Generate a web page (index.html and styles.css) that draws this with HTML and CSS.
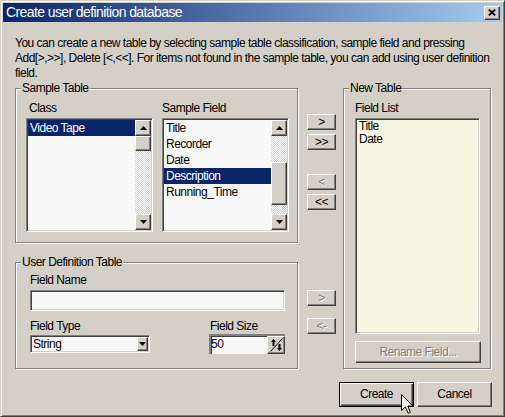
FILE: index.html
```html
<!DOCTYPE html>
<html>
<head>
<meta charset="utf-8">
<title>Create user definition database</title>
<link rel="stylesheet" href="styles.css">
</head>
<body>
<div class="window">
  <div class="titlebar">
    <span class="title">Create user definition database</span>
    <span class="close raised"><svg width="8" height="7" viewBox="0 0 8 7"><path d="M0.8 0.6L7.2 6.4M7.2 0.6L0.8 6.4" stroke="#000" stroke-width="1.7"/></svg></span>
  </div>
  <div class="content">
    <p class="desc">You can create a new table by selecting sample table classification, sample field and pressing Add[&gt;,&gt;&gt;], Delete [&lt;,&lt;&lt;]. For items not found in the sample table, you can add using user definition field.</p>
    <div class="main">
      <div class="left">
        <div class="group sample">
          <div class="caption">Sample Table</div>
          <div class="sample-grid">
            <div class="label label-class">Class</div>
            <div class="label">Sample Field</div>
            <div class="listbox sunken">
              <div class="items">
                <div class="item sel">Video Tape</div>
              </div>
              <div class="vscroll">
                <div class="sbtn raised"><svg width="7" height="4" viewBox="0 0 7 4"><path d="M3.5 0L7 4H0z"/></svg></div>
                <div class="track"><div class="thumb raised thumb-class"></div></div>
                <div class="sbtn raised"><svg width="7" height="4" viewBox="0 0 7 4"><path d="M0 0H7L3.5 4z"/></svg></div>
              </div>
            </div>
            <div class="listbox sunken">
              <div class="items">
                <div class="item">Title</div>
                <div class="item">Recorder</div>
                <div class="item">Date</div>
                <div class="item sel">Description</div>
                <div class="item">Running_Time</div>
              </div>
              <div class="vscroll">
                <div class="sbtn raised"><svg width="7" height="4" viewBox="0 0 7 4"><path d="M3.5 0L7 4H0z"/></svg></div>
                <div class="track"><div class="thumb raised thumb-field"></div></div>
                <div class="sbtn raised"><svg width="7" height="4" viewBox="0 0 7 4"><path d="M0 0H7L3.5 4z"/></svg></div>
              </div>
            </div>
          </div>
        </div>
        <div class="group user">
          <div class="caption">User Definition Table</div>
          <div class="user-form">
            <div class="label">Field Name</div>
            <div class="textbox sunken"></div>
            <div class="type-grid">
              <div class="label label-sm">Field Type</div>
              <div class="label label-sm label-size">Field Size</div>
              <div class="combo sunken">
                <span class="combo-text">String</span>
                <span class="combo-btn raised"><svg width="7" height="4" viewBox="0 0 7 4"><path d="M0 0H7L3.5 4z"/></svg></span>
              </div>
              <div class="spin">
                <span class="spin-text">50</span>
                <span class="spin-btn raised"><svg width="13" height="14" viewBox="0 0 13 14"><path d="M0.5 13.5L12.5 0.5" stroke="#000" stroke-width="1"/><path d="M3.5 1L6 4H4.5V8H2.5V4H1z" fill="#000"/><path d="M9.5 13L12 10H10.5V6H8.5V10H7z" fill="#000"/></svg></span>
              </div>
            </div>
          </div>
        </div>
      </div>
      <div class="mid">
        <div class="btn raised mbtn b-add">&gt;</div>
        <div class="btn raised mbtn">&gt;&gt;</div>
        <div class="btn raised mbtn disabled b-del">&lt;</div>
        <div class="btn raised mbtn">&lt;&lt;</div>
        <div class="btn raised mbtn disabled b-add2">&gt;</div>
        <div class="btn raised mbtn disabled b-del2">&lt;-</div>
      </div>
      <div class="group newtable">
        <div class="caption">New Table</div>
        <div class="label label-list">Field List</div>
        <div class="fieldlist sunken">
          <div class="fitem">Title</div>
          <div class="fitem">Date</div>
        </div>
        <div class="btn raised disabled rename">Rename Field...</div>
      </div>
    </div>
    <div class="actions">
      <div class="btn default">Create</div>
      <div class="btn raised action">Cancel</div>
    </div>
  </div>
  <svg class="cursor" width="13" height="21" viewBox="0 0 13 21"><path d="M0.5 0.5V16.5L4.5 12.8L7.2 19.3L9.4 18.3L6.8 12H11.8Z" fill="#fff" stroke="#000" stroke-width="1" stroke-linejoin="miter"/></svg>
</div>
</body>
</html>
```

FILE: styles.css
```css
* { box-sizing: border-box; }
html, body { margin: 0; padding: 0; }
body {
  background: #d4d0c8;
  font-family: "Liberation Sans", Arial, sans-serif;
  font-size: 12px;
  letter-spacing: -0.5px;
  line-height: 15px;
  color: #000;
}
.window {
  position: relative;
  width: 505px;
  height: 417px;
  background: #d4d0c8;
  border: 1px solid;
  border-color: #d4d0c8 #404040 #404040 #d4d0c8;
  box-shadow: inset 1px 1px #fff, inset -1px -1px #808080;
  padding: 2px;
  display: flex;
  flex-direction: column;
}
.raised {
  background: #d4d0c8;
  border: 1px solid;
  border-color: #fff #404040 #404040 #fff;
  box-shadow: inset -1px -1px #808080;
}
.sunken {
  border: 1px solid;
  border-color: #808080 #fff #fff #808080;
  box-shadow: inset 1px 1px #404040, inset -1px -1px #d4d0c8;
  padding: 1px;
}
.titlebar {
  height: 19px;
  flex: none;
  display: flex;
  align-items: center;
  padding-left: 3px;
  background: linear-gradient(to right, #0a246a, #a6caf0);
  color: #fff;
  font-size: 14px;
  letter-spacing: -0.6px;
  line-height: 19px;
}
.close {
  margin-left: auto;
  margin-right: 2px;
  width: 16px;
  height: 14px;
  display: flex;
  align-items: center;
  justify-content: center;
}
.close svg { display: block; }
.content {
  flex: 1;
  display: flex;
  flex-direction: column;
  padding: 0 10px 0 12px;
}
.desc {
  margin: 14px 0 0;
  line-height: 15px;
}
.main {
  margin-top: 7px;
  display: flex;
  height: 281px;
  flex: none;
}
.left {
  width: 283px;
  display: flex;
  flex-direction: column;
}
.group {
  border: 1px solid #808080;
  box-shadow: inset 1px 1px #fff, 1px 1px #fff;
}
.caption {
  width: fit-content;
  height: 15px;
  margin: -8px 0 0 5px;
  padding: 0 1px;
  background: #d4d0c8;
  white-space: nowrap;
}
.sample { height: 155px; }
.user { height: 107px; margin-top: 19px; }
.sample-grid {
  display: grid;
  grid-template-columns: 127px 127px;
  column-gap: 9px;
  margin: 5px 0 0 10px;
}
.label {
  height: 15px;
  margin-bottom: 2px;
  white-space: nowrap;
}
.label-class { padding-left: 3px; }
.listbox {
  height: 114px;
  display: flex;
  background: #f8f8f8;
}
.items { flex: 1; min-width: 0; }
.item {
  height: 16px;
  line-height: 16px;
  padding-left: 2px;
  white-space: nowrap;
}
.item.sel { background: #0a246a; color: #fff; }
.vscroll {
  width: 16px;
  display: flex;
  flex-direction: column;
}
.sbtn {
  height: 16px;
  flex: none;
  display: flex;
  align-items: center;
  justify-content: center;
}
.sbtn svg, .combo-btn svg { display: block; fill: #000; }
.track {
  flex: 1;
  background: repeating-conic-gradient(#fff 0 25%, #d4d0c8 0 50%) 0 0 / 2px 2px;
}
.thumb { width: 16px; }
.thumb-class { height: 15px; }
.thumb-field { height: 43px; margin-top: 26px; }
.user-form { margin: 3px 12px 0 14px; }
.textbox { height: 21px; background: #f8f8f8; }
.type-grid {
  display: grid;
  grid-template-columns: 179px 76px;
  margin-top: 8px;
  align-items: start;
}
.label-sm { margin-bottom: 1px; }
.label-size { padding-left: 1px; }
.combo {
  width: 120px;
  height: 18px;
  display: flex;
  background: #f8f8f8;
  line-height: 14px;
}
.combo-text { flex: 1; padding-left: 1px; }
.combo-btn {
  width: 11px;
  height: 14px;
  display: flex;
  align-items: center;
  justify-content: center;
}
.spin {
  height: 20px;
  margin-top: -1px;
  display: flex;
  background: #f8f8f8;
  border-top: 2px solid #808080;
  border-left: 2px solid #808080;
  box-shadow: inset 1px 1px #404040;
}
.spin-text { flex: 1; padding-left: 0; line-height: 16px; }
.spin-btn {
  width: 18px;
  height: 18px;
  display: flex;
  align-items: center;
  justify-content: center;
}
.spin-btn svg { display: block; }
.mid {
  width: 29px;
  margin-left: 9px;
  display: flex;
  flex-direction: column;
  padding-top: 26px;
}
.btn {
  display: flex;
  align-items: center;
  justify-content: center;
  white-space: nowrap;
  line-height: 15px;
}
.mbtn { height: 16px; margin-bottom: 4px; }
.b-del { margin-top: 20px; }
.b-add2 { margin-top: 76px; }
.b-del2 { margin-top: 8px; }
.disabled { color: #808080; text-shadow: 1px 1px #fff; }
.newtable {
  width: 148px;
  height: 281px;
  margin-left: 7px;
  padding-left: 11px;
}
.newtable .caption { margin-left: -6px; }
.label-list { margin-top: 5px; }
.fieldlist {
  width: 125px;
  height: 216px;
  background: #f7f7e1;
}
.fitem {
  height: 13px;
  line-height: 13px;
  padding-left: 2px;
}
.rename {
  width: 126px;
  height: 22px;
  margin-top: 7px;
}
.actions {
  display: flex;
  justify-content: flex-end;
  gap: 3px;
  margin-top: 13px;
}
.actions .btn { width: 75px; height: 25px; }
.default {
  background: #d4d0c8;
  border: 1px solid #000;
  box-shadow: inset 1px 1px #fff, inset -1px -1px #404040, inset -2px -2px #808080;
}
.cursor {
  position: absolute;
  left: 400px;
  top: 393px;
  display: block;
}
```
